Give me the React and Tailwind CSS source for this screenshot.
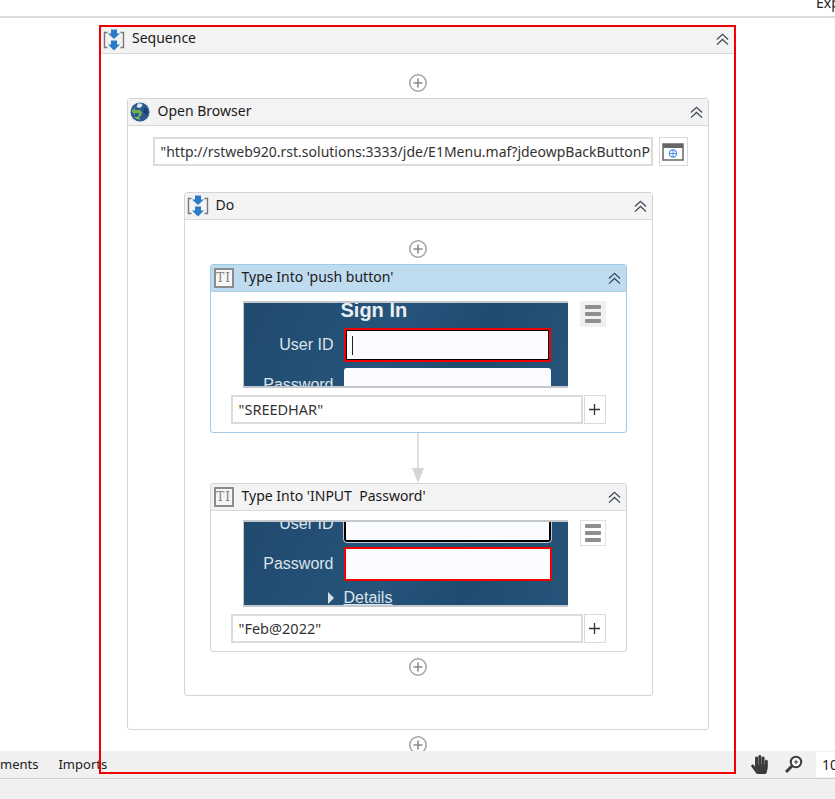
import { FaHandPaper } from "react-icons/fa";

const font = { fontFamily: '"Noto Sans", sans-serif' };

function SeqIcon() {
  return (
    <svg width="22" height="22" viewBox="0 0 22 22" className="-mr-px shrink-0">
      <path d="M4.5 3.5H1.5V18.5H4.5" fill="none" stroke="#777" strokeWidth="1.4" />
      <path d="M17.5 3.5H20.5V18.5H17.5" fill="none" stroke="#777" strokeWidth="1.4" />
      <path d="M8 0.5H14V4.5H17L11 10L5 4.5H8Z" fill="#2a7cc7" />
      <path d="M8 11.5H14V15.5H17L11 21.5L5 15.5H8Z" fill="#2a7cc7" />
    </svg>
  );
}

function GlobeIcon() {
  return (
    <svg width="20" height="20" viewBox="0 0 20 20" className="shrink-0">
      <circle cx="10" cy="10" r="9.5" fill="#2b5a93" />
      <path d="M8 1.5C10 1 12 2 12.5 3.5L10 6L6.5 5Z" fill="#dfe8f2" />
      <path d="M14 6C16 6 18 8 18.5 10.5L16 13L13.5 10Z" fill="#18406f" />
      <path d="M1.5 9L5 5.5V8H9C11 8 12 10 12 12L10 15H7.5L9 12.5C9 11.5 8.5 11 7.5 11H5V13.5Z" fill="#6fb04a" />
      <path d="M3 14C5 16.5 8 17.5 10.5 17.5L8.5 15H5Z" fill="#8bc667" />
    </svg>
  );
}

function TypeIcon() {
  return (
    <span className="flex h-5 w-5 shrink-0 items-center justify-center border-2 border-[#8c8c8c] bg-[#f6f6f6] text-[12px] leading-none tracking-[1px] text-[#808080]" style={{ fontFamily: '"DejaVu Serif", serif' }}>
      TI
    </span>
  );
}

function Chevrons() {
  return (
    <svg width="13" height="13" viewBox="0 0 14 13" className="shrink-0">
      <path d="M1 6.5L7 1L13 6.5" fill="none" stroke="#3f4a5a" strokeWidth="1.4" />
      <path d="M1 12L7 6.5L13 12" fill="none" stroke="#3f4a5a" strokeWidth="1.4" />
    </svg>
  );
}

function AddCircle() {
  return (
    <svg width="18" height="18" viewBox="0 0 18 18" className="shrink-0">
      <circle cx="9" cy="9" r="8.2" fill="#fff" stroke="#a3a3a3" strokeWidth="1.5" />
      <path d="M9 4.5V13.5M4.5 9H13.5" stroke="#8a8a8a" strokeWidth="1.6" />
    </svg>
  );
}

function Header({ icon, title, active, pl = "pl-[3px]", height = "h-[27px]", textPad = "pb-[3px]" }) {
  return (
    <div className={`flex items-center justify-between border-b pr-[5px] ${height} ${pl} ${active ? "border-[#a9cfe9] bg-[#bfdbef]" : "border-[#d9d9d9] bg-[#f3f3f3]"}`}>
      <div className="flex items-center gap-2">
        {icon}
        <span className={`text-[14px] whitespace-pre text-[#1a1a1a] ${textPad}`}>{title}</span>
      </div>
      <Chevrons />
    </div>
  );
}

function TextBox({ value, width }) {
  return (
    <div className={`flex h-[29px] items-center overflow-hidden border-2 border-[#dcdcdc] bg-white pl-[6px] whitespace-nowrap text-[#333] ${width}`}>
      {value}
    </div>
  );
}

function Shot1() {
  return (
    <div className="h-[87px] w-[325px] shrink-0 overflow-hidden border-t-2 border-b-2 border-l border-[#c4c8cc] bg-[linear-gradient(115deg,#204a6e,#26547a_45%,#1f4b70_70%,#27547a)]" style={{ fontFamily: '"Liberation Sans", sans-serif' }}>
      <p className="ml-[97px] h-[25px] text-[20px] leading-[14px] font-bold text-[#e9eef3]">Sign In</p>
      <div className="flex">
        <p className="flex h-[34px] w-[90px] items-center justify-end text-[16px] text-[#dbe4ec]">User ID</p>
        <div className="ml-[10px] flex h-[34px] w-[207px] items-center border-2 border-[#f00000] bg-[#fbfcff] pl-[6px] outline outline-1 -outline-offset-3 outline-black">
          <span className="h-[19px] w-px bg-[#222]" />
        </div>
      </div>
      <div className="mt-[6px] flex">
        <p className="w-[90px] pt-[7px] text-right text-[16px] leading-[20px] text-[#dbe4ec]">Password</p>
        <div className="ml-[10px] h-[30px] w-[207px] rounded-t-[3px] bg-[#fbfcff]" />
      </div>
    </div>
  );
}

function Shot2() {
  return (
    <div className="h-[87px] w-[325px] shrink-0 overflow-hidden border-t-2 border-b-2 border-l border-[#c4c8cc] bg-[linear-gradient(115deg,#204a6e,#26547a_45%,#1f4b70_70%,#27547a)]" style={{ fontFamily: '"Liberation Sans", sans-serif' }}>
      <div className="flex h-[20px]">
        <p className="w-[90px] text-right text-[16px] leading-[4px] text-[#dbe4ec]">User ID</p>
        <div className="ml-[10px] w-[207px] rounded-b-[3px] border-x-2 border-b-2 border-black bg-[#fbfcff] outline outline-1 outline-[#c8ccd0]" />
      </div>
      <div className="mt-[5px] flex">
        <p className="flex h-[34px] w-[90px] items-center justify-end text-[16px] text-[#dbe4ec]">Password</p>
        <div className="ml-[10px] h-[34px] w-[208px] border-2 border-[#f00000] bg-[#fbfcff]" />
      </div>
      <div className="mt-[8px] flex items-center">
        <span className="ml-[84px] h-0 w-0 border-y-[6px] border-l-[6px] border-y-transparent border-l-[#d7dfe6]" />
        <p className="ml-[10px] text-[16px] leading-[18px] text-[#dbe4ec] underline">Details</p>
      </div>
    </div>
  );
}

function MenuButton({ boxed }) {
  return (
    <div className={`flex h-[26px] w-[26px] flex-col items-center justify-center gap-[3px] ${boxed ? "border border-[#dde1e7] bg-white" : "bg-[#f0f0f0]"}`}>
      <span className="h-[4px] w-[16px] rounded-[1px] bg-[#8f8f8f]" />
      <span className="h-[4px] w-[16px] rounded-[1px] bg-[#8f8f8f]" />
      <span className="h-[4px] w-[16px] rounded-[1px] bg-[#8f8f8f]" />
    </div>
  );
}

function TypeInto({ title, value, active, shot }) {
  return (
    <div className={`w-[417px] rounded-[3px] border ${active ? "border-[#9fcbe8]" : "border-[#d4d4d4]"}`}>
      <div className="overflow-hidden rounded-t-[2px]">
        <Header icon={<TypeIcon />} title={title} active={active} />
      </div>
      <div className="flex items-start gap-[12px] pt-[9px] pl-[32px]">
        {shot}
        <MenuButton boxed={!active} />
      </div>
      <div className="mt-[7px] flex gap-px pb-[8px] pl-[20px]">
        <TextBox value={value} width="w-[352px] text-[14.5px]" />
        <div className="flex h-[29px] w-[22px] items-center justify-center border border-[#d5dae3] bg-white">
          <svg width="13" height="13" viewBox="0 0 13 13">
            <path d="M6.5 1V12M1 6.5H12" stroke="#333" strokeWidth="1.3" />
          </svg>
        </div>
      </div>
    </div>
  );
}

function Arrow() {
  return (
    <svg width="14" height="50" viewBox="0 0 14 50" className="shrink-0">
      <path d="M7 0V36" stroke="#d6d6d6" strokeWidth="1.5" />
      <path d="M1 35H13L7 50Z" fill="#d6d6d6" />
    </svg>
  );
}

export default function App() {
  return (
    <div className="relative flex h-[799px] w-[835px] flex-col overflow-hidden bg-white" style={font}>
      <div className="h-[18px] shrink-0 overflow-hidden border-b-2 border-[#dcdcdc] pl-[816px] text-[14px] leading-[6px] text-[#222]">
        Exp
      </div>

      <div className="min-h-0 flex-1 overflow-hidden pt-[8px] pl-[101px]">
        <div className="flex w-[633px] flex-col">
          <Header icon={<SeqIcon />} title="Sequence" pl="pl-[2px]" height="h-[28px]" textPad="pb-[5px]" />
          <div className="flex flex-col items-center pt-[20px]">
            <AddCircle />
            <div className="mt-[6px] w-[582px] rounded-[3px] border border-[#d4d4d4]">
              <Header icon={<GlobeIcon />} title="Open Browser" pl="pl-[2px]" />
              <div className="flex flex-col pt-[11px] pb-[33px]">
                <div className="flex w-full gap-[6px] pl-[25px]">
                  <TextBox value={'"http://rstweb920.rst.solutions:3333/jde/E1Menu.maf?jdeowpBackButtonProtect=PROTECT_OWP"'} width="w-[500px] pr-[4px] text-[14px]" />
                  <div className="flex h-[29px] w-[29px] items-center justify-center border border-[#d5dae3] bg-white">
                    <svg width="22" height="18" viewBox="0 0 22 18">
                      <rect x="1" y="1" width="20" height="16" fill="#fff" stroke="#666" strokeWidth="1.5" />
                      <rect x="1" y="1" width="20" height="4" fill="#666" />
                      <circle cx="11" cy="10.5" r="3.6" fill="none" stroke="#4a90e2" strokeWidth="1.2" />
                      <path d="M7.5 10.5H14.5M11 7V14" stroke="#4a90e2" strokeWidth="1" />
                    </svg>
                  </div>
                </div>

                <div className="mt-[26px] ml-[56px] w-[469px] rounded-[3px] border border-[#d4d4d4]">
                  <Header icon={<SeqIcon />} title="Do" pl="pl-[2px]" />
                  <div className="flex flex-col items-center pt-[20px] pb-[19px]">
                    <AddCircle />
                    <div className="mt-[6px]">
                      <TypeInto title="Type Into 'push button'" value={'"SREEDHAR"'} active shot={<Shot1 />} />
                    </div>
                    <Arrow />
                    <TypeInto title="Type Into 'INPUT  Password'" value={'"Feb@2022"'} shot={<Shot2 />} />
                    <div className="mt-[6px]">
                      <AddCircle />
                    </div>
                  </div>
                </div>
              </div>
            </div>
            <div className="mt-[6px]">
              <AddCircle />
            </div>
          </div>
        </div>
      </div>

      <div className="flex h-[27px] shrink-0 items-center bg-[#f0f0f0] text-[13px] text-[#222]">
        <span>ments</span>
        <span className="ml-[20px]">Imports</span>
        <FaHandPaper className="ml-auto h-[19px] w-[19px] text-[#3c3c3c]" />
        <svg width="19" height="19" viewBox="0 0 19 19" className="ml-[15px]">
          <circle cx="12" cy="7" r="5.2" fill="#fff" stroke="#3c3c3c" strokeWidth="2" />
          <path d="M8.5 10.5L2 17" stroke="#3c3c3c" strokeWidth="3" />
          <path d="M9.8 7H14.2M12 4.8V9.2" stroke="#3c3c3c" strokeWidth="1" />
        </svg>
        <div className="ml-[13px] flex h-[25px] w-[19px] items-center overflow-hidden bg-white pl-[6px] text-[14px]">10</div>
      </div>
      <div className="h-[21px] shrink-0 border-t border-[#cfcfcf] bg-[#f0f0f0]" />

      <div className="pointer-events-none absolute top-[25px] left-[99px] h-[749px] w-[637px] border-2 border-[#f00000]" />
    </div>
  );
}
